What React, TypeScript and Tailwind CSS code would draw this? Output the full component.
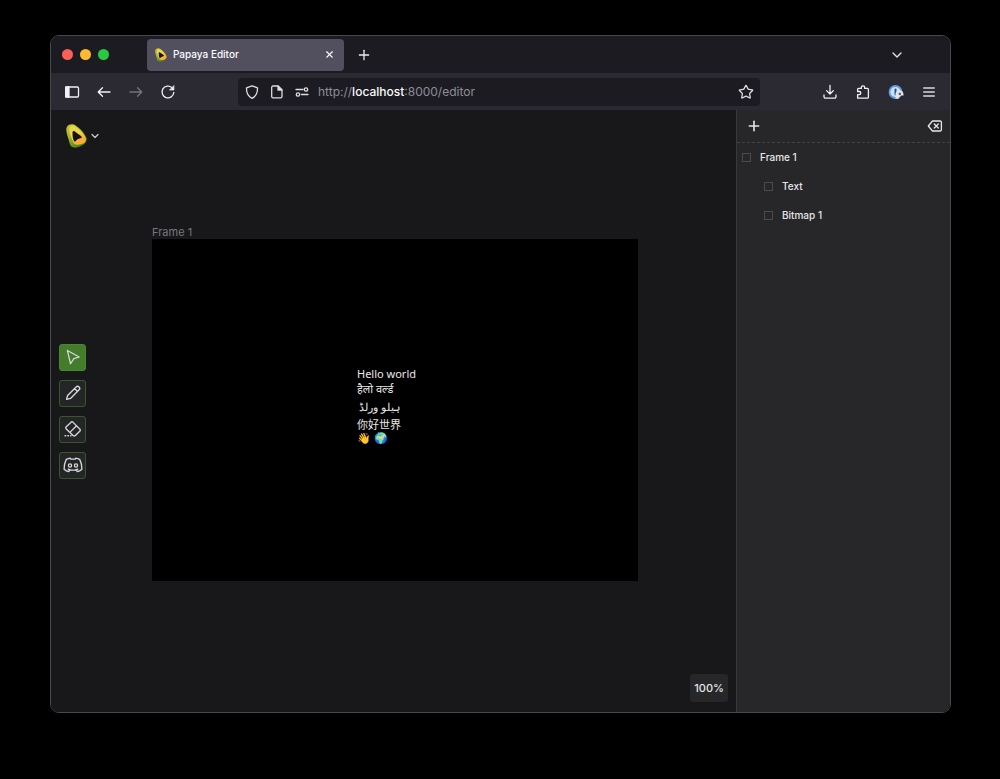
import React from "react";
import { ChevronDown, Plus, Star, X } from "lucide-react";

type IconProps = { className?: string; children: React.ReactNode };

function Icon({ className = "size-4", children }: IconProps) {
  return (
    <svg
      viewBox="0 0 16 16"
      fill="none"
      stroke="currentColor"
      strokeWidth="1.3"
      strokeLinecap="round"
      strokeLinejoin="round"
      className={className}
      aria-hidden="true"
    >
      {children}
    </svg>
  );
}

function Logo({ className, id }: { className: string; id: string }) {
  return (
    <svg viewBox="0 0 42 48" className={className} aria-hidden="true">
      <defs>
        <linearGradient id={id} x1="0.1" y1="0" x2="0.8" y2="1">
          <stop offset="0" stopColor="#dcd848" />
          <stop offset="0.45" stopColor="#f4d84c" />
          <stop offset="0.7" stopColor="#f8b840" />
          <stop offset="1" stopColor="#f09a30" />
        </linearGradient>
        <linearGradient id={id + "-rim"} x1="0" y1="0" x2="0.5" y2="1">
          <stop offset="0" stopColor="#c9c234" />
          <stop offset="0.5" stopColor="#a8b530" />
          <stop offset="1" stopColor="#468a1c" />
        </linearGradient>
      </defs>
      <path d="M1 8C2 2 9-1 16 1C27 7 37 18 41 28C43 38 33 43 25 46C16 49 9 47 7 38C5 27 -1 17 1 8Z" fill={`url(#${id}-rim)`} />
      <path d="M7 7C9 2 15 1 20 6C29 13 37 21 40 29C41 38 33 40 27 41C19 43 15 40 13 33C10 24 5 14 7 7Z" fill={`url(#${id})`} />
      <path d="M13 17C13 14 16 13 19 16L30 24C33 27 31 29 28 30L23 31L20 34C17 36 16 35 15 32C13 27 13 22 13 17Z" fill="#17130c" />
      <path d="M20 34C23 29 32 27 38 29C40 37 35 39 29 40C24 41 21 38 20 34Z" fill="#f9ad38" />
    </svg>
  );
}

function TabBar() {
  return (
    <div className="flex h-[37px] shrink-0 items-center bg-[#1c1b22] pr-[45px] pl-[11px]">
      <div className="flex gap-[7px]">
        <button aria-label="Close window" className="size-[11px] rounded-full bg-[#fc5f57]" />
        <button aria-label="Minimize window" className="size-[11px] rounded-full bg-[#fdbb2f]" />
        <button aria-label="Zoom window" className="size-[11px] rounded-full bg-[#29c840]" />
      </div>
      <div className="ml-[38px] flex h-8 w-[197px] items-center rounded bg-[#52505e] px-2 text-[#fbfbfe]">
        <Logo id="tab-logo" className="h-[14px] w-3" />
        <span className="ml-[6px] flex-1 text-[10px] font-medium">Papaya Editor</span>
        <button aria-label="Close tab" className="p-[1px]">
          <X className="size-[11px]" strokeWidth={2.4} />
        </button>
      </div>
      <button aria-label="New tab" className="ml-3 text-[#ededf2]">
        <Plus className="size-4" strokeWidth={1.9} />
      </button>
      <button aria-label="List all tabs" className="ml-auto text-[#e2e2e8]">
        <ChevronDown className="size-4" strokeWidth={2} />
      </button>
    </div>
  );
}

function AddressBar() {
  return (
    <div className="flex h-[28px] w-[522px] items-center rounded bg-[#1c1b22] px-[6px] text-[#dcdce2]">
      <button aria-label="Tracking protection">
        <Icon>
          <path d="M8 1.8L13.5 3.8C13.7 9 11.8 12.4 8 14.4C4.200 12.4 2.300 9 2.500 3.800Z" />
        </Icon>
      </button>
      <button aria-label="Site information" className="ml-[9px]">
        <Icon>
          <path d="M4 2H9L13 6V12.500A1.300 1.300 0 0 1 11.700 13.800H4A1.300 1.300 0 0 1 2.700 12.500V3.300A1.300 1.300 0 0 1 4 2Z" />
          <path d="M9 2V6H13Z" fill="currentColor" />
        </Icon>
      </button>
      <button aria-label="Permissions" className="ml-[9px]">
        <Icon>
          <path d="M2 5.500H9M7.500 10.500H14" />
          <circle cx="12" cy="5.500" r="1.700" />
          <circle cx="4" cy="10.500" r="1.700" />
        </Icon>
      </button>
      <a href="http://localhost:8000/editor" className="ml-2 flex-1 text-[12px] text-[#8f8e97]">
        http://<span className="font-medium text-[#fbfbfe]">localhost</span>:8000/editor
      </a>
      <button aria-label="Bookmark this page">
        <Star className="size-4" strokeWidth={1.9} />
      </button>
    </div>
  );
}

function Toolbar() {
  return (
    <div className="flex h-[37px] shrink-0 items-center bg-[#2b2a33] px-[13px] text-[#f0f0f5]">
      <div className="flex gap-4">
        <button aria-label="Sidebar">
          <Icon>
            <rect x="1.700" y="3" width="12.800" height="10" rx="1.200" />
            <path d="M1.700 3H5V13H1.700Z" fill="currentColor" />
          </Icon>
        </button>
        <button aria-label="Back">
          <Icon>
            <path d="M14 8H2.200M6.500 3.700L2.200 8L6.500 12.300" />
          </Icon>
        </button>
        <button aria-label="Forward" className="text-[#74737c]">
          <Icon>
            <path d="M2 8H13.800M9.500 3.700L13.800 8L9.500 12.300" />
          </Icon>
        </button>
        <button aria-label="Reload">
          <Icon>
            <path d="M13.800 8.500A5.900 5.900 0 1 1 12 3.700" />
            <path d="M13.900 1.900V6H9.800Z" fill="currentColor" strokeWidth="0.700" />
          </Icon>
        </button>
      </div>
      <div className="flex flex-1 justify-center">
        <AddressBar />
      </div>
      <div className="flex gap-[17px]">
        <button aria-label="Downloads">
          <Icon>
            <path d="M8 1.500V9.800M4.600 6.600L8 10L11.400 6.600M2 11V12.700A1.500 1.500 0 0 0 3.500 14.200H12.500A1.500 1.500 0 0 0 14 12.700V11" />
          </Icon>
        </button>
        <button aria-label="Extensions">
          <Icon>
            <path d="M2.600 14.200V10.700H4.200A1.600 1.600 0 0 0 4.200 7.500H2.600V5.400A1 1 0 0 1 3.600 4.400H6.300V3.500A1.700 1.700 0 0 1 9.700 3.500V4.400H12.400A1 1 0 0 1 13.400 5.400V13.200A1 1 0 0 1 12.400 14.200Z" />
          </Icon>
        </button>
        <button aria-label="Password manager">
          <svg viewBox="0 0 16 16" className="size-4" aria-hidden="true">
            <circle cx="7.500" cy="8" r="6" fill="#cfe1f5" stroke="#5a9fe2" strokeWidth="1.800" />
            <rect x="6.500" y="4.600" width="2" height="6.800" rx="1" fill="#245187" />
            <path d="M7.500 14.800V9.500Q8.500 6.300 11.500 6.200Q15 6.500 15.500 10V11.500H12.500L10.500 14.800Z" fill="#e3e3e8" />
            <path d="M10.800 8.800H12.800V11H10.800Z" fill="#57565f" />
          </svg>
        </button>
        <button aria-label="Application menu" className="text-[#d8d8de]">
          <Icon>
            <path d="M2.700 4H13.300M2.700 8H13.300M2.700 12H13.300" />
          </Icon>
        </button>
      </div>
    </div>
  );
}

const toolButton =
  "flex size-[27px] items-center justify-center rounded-[3px] border text-[#d8d8da]";

function Tools() {
  return (
    <div className="flex flex-col gap-[9px] pb-[2px]">
      <button aria-label="Select" className={`${toolButton} border-[#4a8530] bg-[#437c2b]`}>
        <Icon className="size-[18px]">
          <path d="M3 2.200L13.500 8L8.800 9.400L5.800 14Z" strokeWidth="1.100" />
        </Icon>
      </button>
      <button aria-label="Pencil" className={`${toolButton} border-[#38582b] bg-[#242527]`}>
        <Icon className="size-[18px]">
          <path d="M2.300 13.700L3.200 10.200L10.800 2.600A1.800 1.800 0 0 1 13.400 5.200L5.800 12.800ZM9.400 4L12 6.600" strokeWidth="1.200" />
        </Icon>
      </button>
      <button aria-label="Eraser" className={`${toolButton} border-[#38582b] bg-[#242527]`}>
        <Icon className="size-[18px]">
          <path d="M6.300 1.900L1.800 6.200Q1.200 7 1.800 7.800L8.300 14Q9.100 14.500 9.900 14L14.200 9.800Q14.900 9 14.200 8.200L7.900 1.900Q7.100 1.300 6.300 1.900ZM5.200 11L11.200 5.200M0.900 14H1.500M3.400 14H4M5.900 14H6.200" strokeWidth="1.200" />
        </Icon>
      </button>
      <button aria-label="Discord" className={`${toolButton} border-[#38582b] bg-[#242527]`}>
        <svg viewBox="0 0 20 18" className="h-[18px] w-5" fill="none" stroke="currentColor" strokeWidth="1.3" strokeLinecap="round" strokeLinejoin="round" aria-hidden="true">
          <path d="M7.800 3.200L7.300 2.200Q5.200 2.400 3.300 3.400Q0.900 8 1.100 13.300Q3.200 15.300 5.700 15.700L6.900 13.800Q10 14.600 13.100 13.800L14.300 15.700Q16.800 15.300 18.900 13.300Q19.100 8 16.700 3.400Q14.800 2.400 12.700 2.200L12.200 3.200Q10 2.900 7.800 3.200Z" />
          <path d="M5.200 13.100Q6 13.500 6.900 13.800M14.800 13.100Q14 13.500 13.100 13.800" />
          <circle cx="7" cy="9.500" r="1.600" />
          <circle cx="13" cy="9.500" r="1.600" />
        </svg>
      </button>
    </div>
  );
}

function Canvas() {
  return (
    <main className="flex min-w-0 flex-1 flex-col bg-[#18181a] px-2">
      <div className="flex h-[51px] items-center pl-[7px]">
        <button aria-label="Main menu" className="flex items-center gap-[2px] text-[#d0d0d2]">
          <Logo id="app-logo" className="h-6 w-[21px]" />
          <ChevronDown className="size-3" strokeWidth={2.4} />
        </button>
      </div>
      <div className="flex flex-1 items-center">
        <Tools />
        <div className="flex flex-1 justify-center pr-6">
          <section className="flex w-[486px] flex-col pb-[18px]">
            <h1 className="text-[11px] leading-[14px] text-[#77777a]">Frame 1</h1>
            <div className="flex h-[342px] items-center justify-center bg-black pr-4 pb-[10px] font-['Noto_Sans','Noto_Sans_CJK_SC',sans-serif] text-[11px] text-[#e8e8e8]">
              <div className="w-[60px] whitespace-nowrap">
                <p className="leading-[15px]">Hello world</p>
                <p className="leading-[15px]">हैलो वर्ल्ड</p>
                <p className="pl-[2px] leading-[21px]"><bdi>ہیلو ورلڈ</bdi></p>
                <p className="leading-[15px]" lang="zh-CN">你好世界</p>
                <p className="leading-[12px]">👋 🌍</p>
              </div>
            </div>
          </section>
        </div>
      </div>
      <div className="flex h-[49px] items-start justify-end">
        <button className="mt-[11px] h-7 rounded-[3px] bg-[#27272a] px-1 text-[11px] font-medium text-[#e6e6e8]">
          100%
        </button>
      </div>
    </main>
  );
}

const layers = [
  { name: "Frame 1", nested: false },
  { name: "Text", nested: true },
  { name: "Bitmap 1", nested: true },
];

function Layers() {
  return (
    <aside className="w-[214px] shrink-0 border-l border-[#3a3a3d] bg-[#27272a] text-[#e6e6e8]">
      <div className="flex h-[33px] items-center justify-between border-b border-dashed border-[#424245] pr-[7px] pl-[9px]">
        <button aria-label="Add layer">
          <Plus className="size-4" strokeWidth={2.4} />
        </button>
        <button aria-label="Delete layer">
          <Icon>
            <path d="M5.500 3H13.200A1.200 1.200 0 0 1 14.400 4.200V11.800A1.200 1.200 0 0 1 13.200 13H5.500L1.300 8ZM7.300 6L11.300 10M11.300 6L7.300 10" />
          </Icon>
        </button>
      </div>
      <ul>
        {layers.map((layer) => (
          <li key={layer.name} className={layer.nested ? "pl-[27px]" : "pl-[5px]"}>
            <label className="flex h-[29px] items-center gap-[9px] text-[10px] font-medium">
              <input type="checkbox" className="size-[9px] appearance-none border border-[#4b4b4e]" />
              {layer.name}
            </label>
          </li>
        ))}
      </ul>
    </aside>
  );
}

export default function App() {
  return (
    <div className="flex min-h-screen flex-col bg-black pt-[35px] pr-[49px] pb-[66px] pl-[50px] font-['Inter',sans-serif]">
      <div className="flex flex-1 flex-col overflow-hidden rounded-[9px] border border-[#47474c]">
        <TabBar />
        <Toolbar />
        <div className="flex flex-1">
          <Canvas />
          <Layers />
        </div>
      </div>
    </div>
  );
}
